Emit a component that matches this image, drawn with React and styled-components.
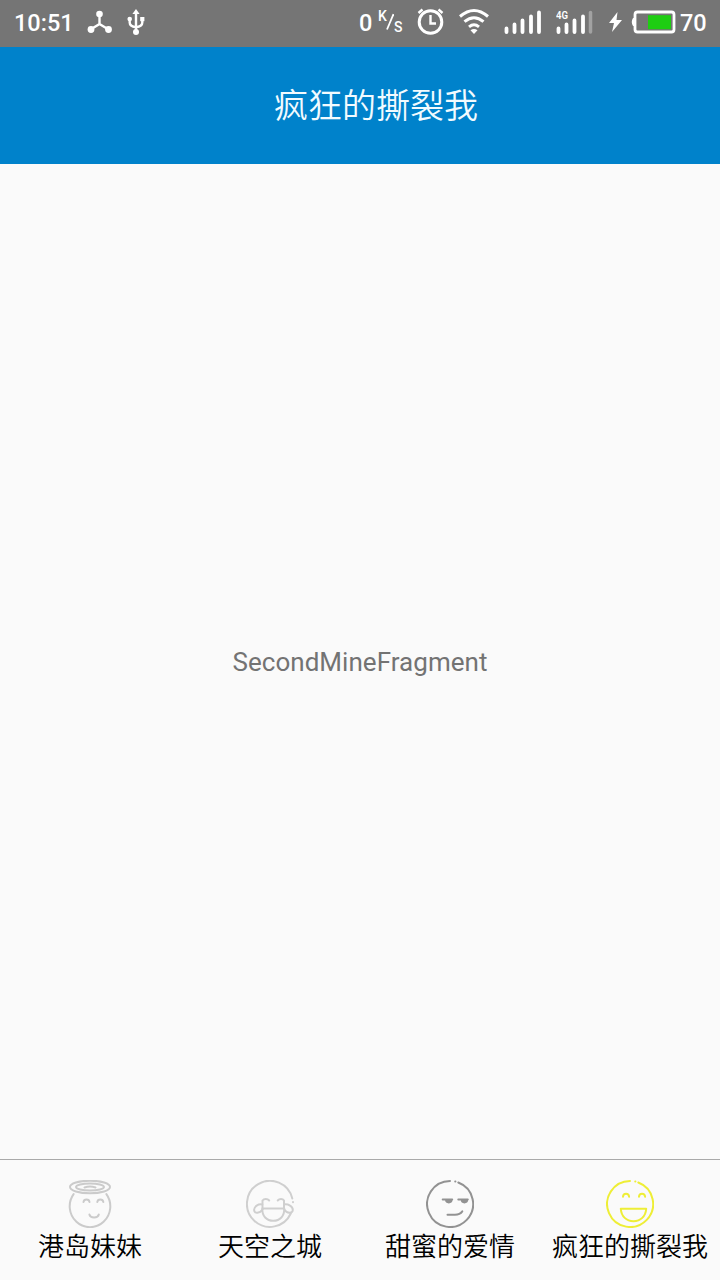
import React from "react";
import styled, { createGlobalStyle } from "styled-components";

const GlobalStyle = createGlobalStyle`
  * { box-sizing: border-box; }
  body { margin: 0; background: #fafafa; }
`;

const Screen = styled.div`
  display: flex;
  flex-direction: column;
  width: 720px;
  height: 1280px;
  overflow: hidden;
  background: #fafafa;
  font-family: Roboto, "Noto Sans CJK SC", sans-serif;
`;

const StatusBar = styled.header`
  display: flex;
  justify-content: space-between;
  flex: none;
  height: 47px;
  padding: 0 13px;
  background: #757575;
  color: #fff;
`;

const StatusGroup = styled.div`
  display: flex;
  align-items: center;
  height: 44px;
`;

const StatusText = styled.span`
  flex: none;
  width: ${(p) => p.$width}px;
  margin-left: ${(p) => p.$gap || 0}px;
  font-size: 23.5px;
  font-weight: 500;
  line-height: 46px;
  padding-top: 1px;
  white-space: nowrap;
`;

const StatusIcon = styled.svg`
  flex: none;
  display: block;
  height: 44px;
  margin-left: ${(p) => p.$gap}px;
  fill: none;
  stroke: #fff;
`;

const SpeedUnit = styled.span`
  display: flex;
  flex: none;
  width: 25px;
  height: 26px;
  margin-left: 5px;
  font-weight: 500;
  line-height: 15px;
`;

const UnitPart = styled.span`
  width: ${(p) => p.$width}px;
  font-size: ${(p) => p.$size}px;
  padding-top: ${(p) => p.$drop || 0}px;
`;

const TitleBar = styled.div`
  display: flex;
  justify-content: center;
  align-items: center;
  flex: none;
  height: 117px;
  padding: 0 0 4px 32px;
  background: #0082cb;
`;

const Title = styled.h1`
  margin: 0;
  color: #f2fbff;
  font-family: "Noto Sans CJK SC", sans-serif;
  font-size: 34px;
  font-weight: 350;
  line-height: 50px;
`;

const Content = styled.main`
  display: flex;
  flex: 1;
  justify-content: center;
  align-items: center;
  color: #737373;
  font-size: 26px;
  letter-spacing: 0.04px;
  line-height: 34px;
`;

const TabBar = styled.nav`
  display: grid;
  grid-template-columns: repeat(4, 1fr);
  flex: none;
  height: 121px;
  border-top: 1px solid #a9a9a9;
`;

const Tab = styled.div`
  display: flex;
  flex-direction: column;
  align-items: center;
  padding-top: 20px;
`;

const Face = styled.svg`
  display: block;
  flex: none;
  width: 48px;
  height: 48px;
  fill: none;
  stroke: ${(p) => p.$color};
  stroke-width: 2;
  stroke-linecap: round;
  stroke-linejoin: round;
`;

const TabLabel = styled.span`
  color: #000;
  font-family: "Noto Sans CJK SC", sans-serif;
  font-size: 26px;
  font-weight: 350;
  line-height: 34px;
  white-space: nowrap;
`;

const AngelFace = () => (
  <Face $color="#cbcbcb" viewBox="0 0 48 48">
    <ellipse cx="24" cy="7" rx="20" ry="6.300" />
    <ellipse cx="24" cy="7" rx="14" ry="3.600" />
    <path d="M18.500 7.500q5.500-1.800 11 0" />
    <path d="M7.600 13.200A20.300 20.800 0 1 0 40.400 13.200" transform="translate(0 .9)" />
    <path d="M17.500 22c.4-3.400 5.600-3.400 6 0M31.300 22c.4-3.400 5.600-3.400 6 0M23.400 34.500c1 4 8.400 4 9.400 0" />
  </Face>
);

const TearsFace = () => (
  <Face $color="#cfcfcf" viewBox="0 0 48 48">
    <path d="M46.300 18.500A23 23 0 1 0 44.800 33.500M47 22v.3" />
    <path d="M16.500 28.300V20.500c1.500-2 5-2 6.700 0M31.700 20.500c1.700-2 5-2 6.300 0v7.800" />
    <path d="M16.300 28.600H38.300C38.500 36 34 40.800 27.300 40.800S16 36 16.300 28.600z" />
    <path d="M16.300 24.500c-4-.8-8.300 2-8.200 5.500.2 4 5.800 3.500 8.400-.5M38.100 24.500c4-.8 8.800 2 8.700 5.500-.2 4-6 3.500-8.500-.5" />
  </Face>
);

const SmirkFace = () => (
  <Face $color="#929292" viewBox="0 0 48 48">
    <path d="M24 1A23 23 0 1 0 32.300 2.500M29.200 1.500h.2" />
    <path d="M16.700 19.500h9.500M32.300 19.500h9.500M20 20c.3 3.200 5.300 3.200 5.600 0M35.700 20c.3 3.200 5.200 3.200 5.500 0M22 20.800h2M37.500 20.800h2" />
    <path d="M21.500 34.700h7.500c3.500 0 5.800-1.200 7.300-3.300" />
  </Face>
);

const LaughFace = () => (
  <Face $color="#eeee36" viewBox="0 0 48 48">
    <path d="M24 1A23 23 0 1 0 32.300 2.500M29.200 1.500h.2" />
    <path d="M17 16.800c.2-4 5.800-4 6.100 0M33 16.800c.2-4 5.800-4 6.100 0" />
    <path d="M14.800 28.700h25.400C39.700 36.500 34.500 41.200 27.500 41.200S15.300 36.500 14.800 28.700z" />
  </Face>
);

const tabs = [
  { label: "港岛妹妹", Icon: AngelFace },
  { label: "天空之城", Icon: TearsFace },
  { label: "甜蜜的爱情", Icon: SmirkFace },
  { label: "疯狂的撕裂我", Icon: LaughFace },
];

export default function App() {
  return (
    <>
      <GlobalStyle />
      <Screen>
        <StatusBar>
          <StatusGroup>
            <StatusText $width={61} $gap={1}>10:51</StatusText>
            <StatusIcon $gap={12} width="25" viewBox="0 0 25 44">
              <path d="M12.500 14v10L3.500 29.500M12.500 24l9 5.500" strokeWidth="2.400" />
              <g fill="#fff" stroke="none">
                <circle cx="12.500" cy="14" r="3.300" />
                <circle cx="4" cy="29.500" r="3.400" />
                <circle cx="21.500" cy="29.500" r="3.400" />
              </g>
            </StatusIcon>
            <StatusIcon $gap={15} width="18" viewBox="0 0 18 44">
              <path d="M9 12v20M2.700 19v3.500Q2.700 26.500 9 27.200Q15.300 26.500 15.300 22.500V19" strokeWidth="2.400" />
              <g fill="#fff" stroke="none">
                <path d="M9 9l3.600 5H5.400z" />
                <circle cx="9" cy="32" r="3" />
                <circle cx="2.700" cy="19" r="2.300" />
                <path d="M13.200 17h4.200v4.200h-4.200z" />
              </g>
            </StatusIcon>
          </StatusGroup>
          <StatusGroup>
            <StatusText $width={14}>0</StatusText>
            <SpeedUnit>
              <UnitPart $width={7} $size={14}>K</UnitPart>
              <StatusIcon $gap={0} width="9" viewBox="0 9 9 44">
                <path d="M8.500 14L2 29.500" strokeWidth="1.800" />
              </StatusIcon>
              <UnitPart $width={9} $size={14} $drop={11}>S</UnitPart>
            </SpeedUnit>
            <StatusIcon $gap={14} width="28" viewBox="0 0 28 44">
              <circle cx="13.500" cy="22" r="11.300" strokeWidth="3" />
              <path d="M13.500 15v8.500H19" strokeWidth="2.400" />
              <path d="M1.500 13l4-3.500M25.500 13l-4-3.500" strokeWidth="2.400" />
            </StatusIcon>
            <StatusIcon $gap={14} width="30" viewBox="0 0 30 44">
              <path d="M1 16.500q14-12 28 0M5.500 21.700q9.500-8 19 0M10 26.800q5-4 10 0" strokeWidth="3" />
              <path d="M15 34l-3.500-3.700q3.500-2.600 7 0z" fill="#fff" stroke="none" />
            </StatusIcon>
            <StatusIcon $gap={15} width="38" viewBox="0 0 38 44">
              <path d="M2.500 32v-3.500M10.500 32v-7.500M18.500 32V20.500M27 32V16.500M35 32V12.500" strokeWidth="3.800" strokeLinecap="round" />
            </StatusIcon>
            <StatusIcon $gap={14} width="38" viewBox="0 0 38 44">
              <text x="0" y="18.500" fill="#fff" stroke="none" fontSize="11" fontWeight="600" textLength="12" lengthAdjust="spacingAndGlyphs">4G</text>
              <path d="M2.500 32v-3.500M10.500 32v-7.500M18.500 32V20.500M27 32V16.500" strokeWidth="3.800" strokeLinecap="round" />
              <path d="M34.500 32V12.500" stroke="#a2a2a2" strokeWidth="3.500" strokeLinecap="round" />
            </StatusIcon>
            <StatusIcon $gap={14} width="14" viewBox="0 0 14 44">
              <path d="M9.500 12L1 23h5L4 32l10-12H8.500z" fill="#fff" stroke="none" />
            </StatusIcon>
            <StatusIcon $gap={9} width="46" viewBox="0 0 46 44">
              <rect x="4" y="12" width="39" height="20" rx="2.500" strokeWidth="2.800" />
              <path d="M3.500 18H2q-2.500 4 0 8h1.500z" fill="#fff" stroke="none" />
              <path d="M17 15.200h23v14H17z" fill="#1ecd12" stroke="none" />
            </StatusIcon>
            <StatusText $width={27} $gap={3}>70</StatusText>
          </StatusGroup>
        </StatusBar>
        <TitleBar>
          <Title>疯狂的撕裂我</Title>
        </TitleBar>
        <Content>SecondMineFragment</Content>
        <TabBar>
          {tabs.map(({ label, Icon }) => (
            <Tab key={label}>
              <Icon />
              <TabLabel>{label}</TabLabel>
            </Tab>
          ))}
        </TabBar>
      </Screen>
    </>
  );
}
